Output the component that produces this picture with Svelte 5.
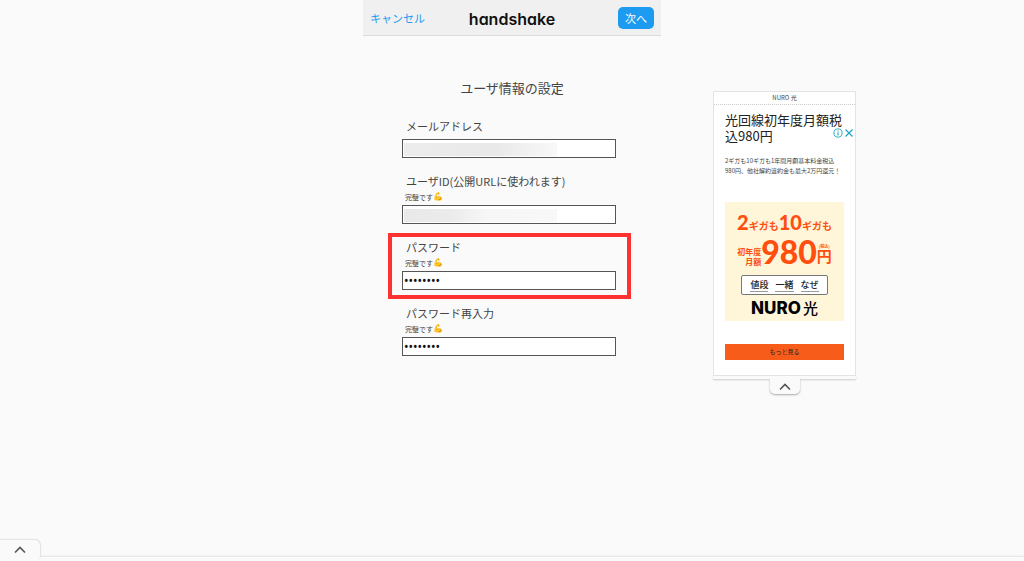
<script lang="ts">
  interface Field {
    id: string;
    label: string;
    type: 'text' | 'password';
    value: string;
    hint?: string;
    masked?: 'long' | 'short';
    highlighted?: boolean;
  }

  let fields = $state<Field[]>([
    { id: 'email', label: 'メールアドレス', type: 'text', value: '', masked: 'long' },
    { id: 'user-id', label: 'ユーザID(公開URLに使われます)', type: 'text', value: '', hint: '完璧です', masked: 'short' },
    { id: 'password', label: 'パスワード', type: 'password', value: 'password', hint: '完璧です', highlighted: true },
    { id: 'password-confirm', label: 'パスワード再入力', type: 'password', value: 'password', hint: '完璧です' }
  ]);

  let adOpen = $state(true);
  const keywords = ['値段', '一緒', 'なぜ'];
</script>

{#snippet chevron()}
  <svg class="chevron" viewBox="0 0 12 8" fill="none" aria-hidden="true">
    <path d="M1 6.5L6 1.5L11 6.5" stroke="currentColor" stroke-width="1.6" />
  </svg>
{/snippet}

<div class="page">
  <header class="topbar">
    <a class="cancel" href="#cancel">キャンセル</a>
    <h1 class="logo">handshake</h1>
    <button class="next" type="submit" form="user-form">次へ</button>
  </header>

  <form id="user-form" class="form" onsubmit={(e) => e.preventDefault()}>
    <h2 class="title">ユーザ情報の設定</h2>
    {#each fields as field (field.id)}
      <div class="field" class:highlighted={field.highlighted}>
        <label for={field.id}>{field.label}</label>
        {#if field.hint}
          <p class="hint">{field.hint}<span class="emoji">💪</span></p>
        {/if}
        <input
          id={field.id}
          class={field.masked ?? 'plain'}
          type={field.type}
          autocomplete="off"
          bind:value={field.value}
        />
      </div>
    {/each}
  </form>

  <aside class="ad">
    {#if adOpen}
      <div class="ad-card">
        <div class="ad-brand">NURO 光</div>
        <div class="ad-body">
          <div class="ad-marks">
            <button aria-label="広告について">
              <svg viewBox="0 0 10 10" fill="none" stroke="currentColor">
                <circle cx="5" cy="5" r="4.1" stroke-width="0.9" />
                <path d="M5 4.2V7.6M5 2.4V3.4" stroke-width="1.1" />
              </svg>
            </button>
            <button aria-label="広告を閉じる">
              <svg viewBox="0 0 10 10" fill="none" stroke="currentColor">
                <path d="M1.5 1.5L8.5 8.5M8.5 1.5L1.5 8.5" stroke-width="1.2" />
              </svg>
            </button>
          </div>
          <h3>光回線初年度月額税込980円</h3>
          <p class="ad-text">2ギガも10ギガも1年間月額基本料金税込<br />980円、他社解約違約金も最大2万円還元！</p>
          <div class="banner">
            <div class="speed"><b>2</b>ギガも<b>10</b>ギガも</div>
            <div class="price">
              <span class="term">初年度<br />月額</span>
              <b class="amount">980</b>
              <span class="yen"><small>(税込)</small>円</span>
            </div>
            <div class="keywords">
              {#each keywords as word}
                <span>{word}</span>
              {/each}
            </div>
            <div class="nuro"><b>NURO</b>光</div>
          </div>
          <a class="more" href="#more">もっと見る</a>
        </div>
      </div>
    {/if}
    <div class="ad-rail"></div>
    <button class="ad-tab" aria-label="広告を開閉" onclick={() => (adOpen = !adOpen)}>
      {@render chevron()}
    </button>
  </aside>

  <footer class="drawer">
    <button class="drawer-tab" aria-label="開く">{@render chevron()}</button>
    <div class="drawer-rail"></div>
  </footer>
</div>

<style>
  :global(body) {
    margin: 0;
    background: #fafafa;
  }

  .page {
    display: grid;
    grid-template-columns: 1fr 298px 1fr;
    grid-template-rows: auto 1fr auto;
    min-height: 100vh;
    color: #444;
    font-family: 'Noto Sans CJK JP', sans-serif;
  }

  h1,
  h2,
  h3,
  p {
    margin: 0;
    font-weight: 400;
  }

  button {
    padding: 0;
    border: 0;
    font-family: inherit;
    cursor: pointer;
  }

  .topbar {
    grid-column: 2;
    display: grid;
    grid-template-columns: 1fr auto 1fr;
    align-items: center;
    box-sizing: border-box;
    height: 36px;
    padding: 0 7px;
    background: #f0f0f0;
    border-bottom: 1px solid #dcdcdc;
  }

  .cancel {
    color: #1d9bf0;
    font-size: 11px;
    text-decoration: none;
  }

  .logo {
    padding-top: 3px;
    color: #111;
    font-family: Inter, sans-serif;
    font-size: 16px;
    font-weight: 600;
    font-feature-settings: 'cv11';
  }

  .next {
    justify-self: end;
    width: 36px;
    height: 22px;
    border-radius: 5px;
    background: #1d9bf0;
    color: #fff;
    font-size: 11px;
  }

  .form {
    grid-column: 2;
    padding: 42px 30px 24px 25px;
  }

  .title {
    margin: 0 -5px 14px 0;
    font-size: 13px;
    line-height: 20px;
    text-align: center;
  }

  .field {
    display: flex;
    flex-direction: column;
    padding: 2px 11px 5px 10px;
    border: 4px solid transparent;
  }

  .field.highlighted {
    border-color: #ff3131;
  }

  .field label {
    margin-bottom: 5px;
    padding-left: 4px;
    font-size: 11px;
    line-height: 16px;
  }

  .hint {
    display: flex;
    margin: -2px 0 3px;
    padding-left: 3px;
    font-size: 7px;
    line-height: 10px;
  }

  .emoji {
    font-family: 'Noto Color Emoji', sans-serif;
    font-size: 8px;
  }

  .field input {
    box-sizing: border-box;
    width: 100%;
    height: 19px;
    padding: 0 1px;
    border: 1px solid #555;
    border-radius: 0;
    background: #fff;
    color: #111;
    font-family: 'Noto Sans', 'Noto Sans CJK JP', sans-serif;
    font-size: 12px;
  }

  .field input.long,
  .field input.short {
    background: linear-gradient(90deg, #ececec, #e9e9e9 60%, #f8f8f8) 1px 3px / 153px 13px no-repeat #fff;
  }

  .field input.short {
    background-image: linear-gradient(90deg, #e9e9e9, #ebebeb 30%, #f7f7f7 55%, #f8f8f8);
  }

  .ad {
    grid-column: 3;
    display: flex;
    flex-direction: column;
    align-items: center;
    width: 143px;
    margin: 55px 0 0 52px;
  }

  .ad-card {
    box-sizing: border-box;
    width: 100%;
    border: 1px solid #e4e4e4;
    background: #fff;
  }

  .ad-brand {
    border-bottom: 1px dotted #ccc;
    font-size: 6px;
    line-height: 12px;
    text-align: center;
  }

  .ad-body {
    position: relative;
    padding: 7px 11px 15px;
  }

  .ad-marks {
    position: absolute;
    top: 23px;
    right: 1px;
    display: flex;
    gap: 1px;
  }

  .ad-marks button {
    display: flex;
    width: 10px;
    height: 10px;
    background: #fff;
    color: #1ba5c4;
  }

  .ad-marks svg {
    width: 10px;
    height: 10px;
  }

  .ad h3 {
    margin-right: -2px;
    color: #222;
    font-size: 13px;
    line-height: 16px;
  }

  .ad-text {
    margin: 12px -4px 26px 0;
    font-size: 6px;
    line-height: 10px;
    white-space: nowrap;
  }

  .banner {
    display: flex;
    flex-direction: column;
    align-items: center;
    box-sizing: border-box;
    height: 119px;
    padding-top: 7px;
    background: #fff6da;
    color: #ff4f0f;
    font-weight: 700;
  }

  .speed {
    display: flex;
    align-items: baseline;
    height: 26px;
    font-size: 10px;
    line-height: 26px;
  }

  .speed b,
  .amount {
    font-family: Lato, sans-serif;
    font-weight: 900;
  }

  .speed b {
    font-size: 20px;
  }

  .price {
    display: flex;
    align-items: center;
    height: 34px;
  }

  .term {
    padding-top: 10px;
    font-size: 8px;
    line-height: 10px;
    text-align: right;
  }

  .amount {
    font-size: 32px;
    line-height: 34px;
  }

  .yen {
    display: flex;
    flex-direction: column;
    align-items: center;
    padding-top: 4px;
    font-size: 15px;
    line-height: 16px;
  }

  .yen small {
    font-size: 4px;
    line-height: 4px;
  }

  .keywords {
    display: flex;
    justify-content: center;
    gap: 7px;
    box-sizing: border-box;
    width: 87px;
    height: 20px;
    margin-top: 6px;
    padding-top: 3px;
    border: 1px solid #777;
    border-radius: 2px;
    background: #fff;
    color: #222;
    font-size: 9px;
    font-weight: 500;
    line-height: 12px;
  }

  .keywords span {
    height: 12px;
    border-bottom: 1px solid #999;
  }

  .nuro {
    display: flex;
    align-items: center;
    gap: 2px;
    margin-top: 3px;
    color: #000;
    font-size: 15px;
    font-weight: 500;
    line-height: 20px;
  }

  .nuro b {
    font-family: Inter, sans-serif;
    font-size: 17px;
    font-weight: 800;
  }

  .more {
    display: block;
    margin-top: 23px;
    background: #f75c1b;
    color: #222;
    font-size: 6px;
    line-height: 16px;
    text-align: center;
    text-decoration: none;
  }

  .ad-rail {
    width: 100%;
    height: 3px;
    background: #fafafa;
    box-shadow: 0 1px 2px #ccc;
  }

  .ad-tab {
    width: 30px;
    height: 15px;
    border-radius: 0 0 5px 5px;
    background: #fafafa;
    box-shadow: 0 1px 2px #aaa;
    color: #555;
    clip-path: inset(0 -4px -4px);
  }

  .chevron {
    display: block;
    width: 12px;
    height: 8px;
    margin: 0 auto;
  }

  .drawer {
    grid-column: 1 / -1;
  }

  .drawer-tab {
    display: block;
    width: 40px;
    height: 17px;
    padding-top: 3px;
    border-radius: 0 5px 0 0;
    background: #fafafa;
    box-shadow: 0 0 2px #aaa;
    color: #555;
    clip-path: inset(-4px -4px 0);
  }

  .drawer-rail {
    height: 4px;
    margin-left: 40px;
    background: #fafafa;
    box-shadow: 0 -1px 2px #e2e2e2;
  }
</style>
